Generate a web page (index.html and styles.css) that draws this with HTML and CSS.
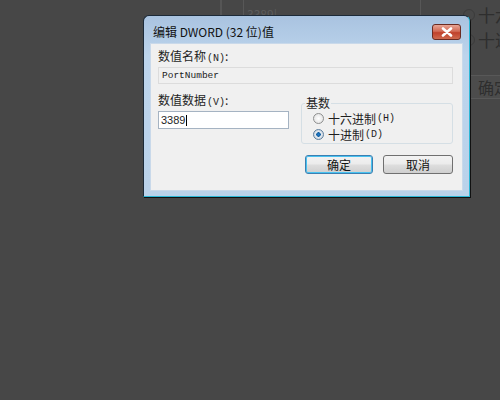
FILE: index.html
```html
<!DOCTYPE html>
<html lang="zh-CN">
<head>
    <meta charset="UTF-8">
    <title>编辑 DWORD (32 位)值</title>
    <link rel="stylesheet" href="styles.css">
</head>
<body>

<div class="desktop">
    <!-- ventana de fondo, casi oculta -->
    <div class="bg-line"></div>
    <div class="bg-input">3389|</div>
    <div class="bg-radio r1"></div>
    <div class="bg-radio r2"></div>
    <div class="bg-text t1">十六</div>
    <div class="bg-text t2">十进</div>
    <div class="bg-button">确定</div>

    <div class="dialog">
        <div class="titlebar">
            <span class="title">编辑 DWORD (32 位)值</span>
            <div class="close">
                <svg width="14" height="10" viewBox="0 0 14 10">
                    <path d="M3 1.5 L11 8.5 M11 1.5 L3 8.5" stroke="#fff" stroke-width="2.6" stroke-linecap="round"/>
                </svg>
            </div>
        </div>
        <div class="client">
            <div class="label">数值名称<span class="key">(N)</span>:</div>
            <div class="field readonly">PortNumber</div>

            <div class="row">
                <div class="data">
                    <div class="label">数值数据<span class="key">(V)</span>:</div>
                    <div class="field edit">3389<span class="caret"></span></div>
                </div>
                <fieldset class="group">
                    <legend>基数</legend>
                    <label class="radio"><span class="dot"></span>十六进制<span class="key">(H)</span></label>
                    <label class="radio"><span class="dot on"></span>十进制<span class="key">(D)</span></label>
                </fieldset>
            </div>

            <div class="buttons">
                <button class="btn default">确定</button>
                <button class="btn">取消</button>
            </div>
        </div>
    </div>
</div>

</body>
</html>
```

FILE: styles.css
```css
/* Diálogo estilo Windows 7 sobre fondo oscuro */
body {
    margin: 0;
    background-color: #474747;
    font-family: "Noto Sans CJK SC", "Liberation Sans", sans-serif;
    font-size: 12px;
    color: #1e1e1e;
}
.desktop {
    position: relative;
    width: 500px;
    height: 400px;
    overflow: hidden;
}

/* restos de la ventana de atrás */
.bg-line {
    position: absolute;
    left: 220px;
    top: 0;
    width: 2px;
    height: 20px;
    background-color: #555;
}
.bg-input {
    position: absolute;
    left: 243px;
    top: -4px;
    width: 178px;
    height: 22px;
    border: 1px solid #575757;
    color: #5c5c5c;
    font-size: 12px;
    line-height: 14px;
    padding: 10px 0 0 3px;
    box-sizing: border-box;
}
.bg-radio {
    position: absolute;
    left: 463px;
    width: 10px;
    height: 10px;
    border: 1px solid #3b3b3b;
    border-radius: 50%;
}
.bg-radio.r1 { top: 9px; }
.bg-radio.r2 { top: 34px; }
.bg-text {
    position: absolute;
    left: 478px;
    font-size: 17px;
    line-height: 22px;
    color: #2e2e2e;
    white-space: nowrap;
}
.bg-text.t1 { top: 4px; }
.bg-text.t2 { top: 29px; }
.bg-button {
    position: absolute;
    left: 466px;
    top: 75px;
    width: 50px;
    height: 22px;
    border: 1px solid #585858;
    background-color: #4c4c4c;
    color: #2e2e2e;
    font-size: 16px;
    line-height: 22px;
    padding-left: 11px;
}

/* ventana */
.dialog {
    position: absolute;
    left: 143px;
    top: 15px;
    width: 325px;
    height: 180px;
    border: 1px solid #1c2a38;
    border-right-color: #2bb7d6;
    border-bottom-color: #2bb7d6;
    border-radius: 6px 6px 0 0;
    background: linear-gradient(#a9c3e0, #bcd4ec 40px, #bad2ea);
    box-shadow: 1px 1px 0 #111;
}
.titlebar {
    display: flex;
    align-items: center;
    height: 27px;
    padding: 0 8px 0 9px;
}
.title {
    flex: 1;
    font-size: 12px;
    color: #111;
    padding-top: 4px;
}
.close {
    display: flex;
    align-items: center;
    justify-content: center;
    width: 27px;
    height: 14px;
    margin-top: 4px;
    border: 1px solid #6b2b22;
    border-radius: 3px;
    background: linear-gradient(#e7a595, #d26a55 45%, #c0412b 55%, #cf6a4f);
}
.client {
    margin: 0 6px;
    height: 148px;
    box-sizing: border-box;
    background-color: #f0f0f0;
    border: 1px solid #c9d9ea;
    padding: 3px 9px 0 7px;
}
.label {
    line-height: 18px;
    height: 18px;
}
.key {
    font-family: "Liberation Mono", monospace;
    font-size: 10px;
    margin-left: 1px;
}
.field {
    box-sizing: border-box;
    border: 1px solid #dcdcdc;
    height: 17px;
    padding-left: 3px;
}
.readonly {
    margin-top: 2px;
    background-color: #f0f0f0;
    font-family: "Liberation Mono", monospace;
    font-size: 9.5px;
    line-height: 15px;
    color: #222;
}
.row {
    display: flex;
    justify-content: space-between;
    margin-top: 7px;
}
.data {
    width: 131px;
}
.edit {
    margin-top: 2px;
    height: 18px;
    background-color: #fff;
    border-color: #a5b3c2;
    line-height: 16px;
    font-family: "Liberation Sans", sans-serif;
    font-size: 11px;
    padding-left: 2px;
}
.caret {
    display: inline-block;
    width: 1px;
    height: 11px;
    background-color: #000;
    vertical-align: -2px;
    margin-left: 1px;
}
.group {
    width: 152px;
    height: 48px;
    box-sizing: border-box;
    margin: 0;
    padding: 0 0 0 11px;
    border: 1px solid #d5dfe5;
    border-radius: 3px;
    margin-top: 5px;
}
.group legend {
    padding: 0 1px;
    margin-left: -8px;
    line-height: 14px;
    font-size: 12px;
}
.radio {
    display: flex;
    align-items: center;
    height: 16px;
}
.dot {
    box-sizing: border-box;
    width: 11px;
    height: 11px;
    margin-right: 4px;
    border: 1px solid #8e8f8f;
    border-radius: 50%;
    background: radial-gradient(#ffffff, #dcdcdc);
}
.dot.on {
    border-color: #5e7f9e;
    background: radial-gradient(circle, #1f7ccf 0, #145fa0 2px, #e9eef3 2.5px, #c8d2dc 5px);
}
.buttons {
    display: flex;
    justify-content: flex-end;
    gap: 10px;
    margin-top: 11px;
}
.btn {
    width: 70px;
    height: 19px;
    padding: 0;
    font-family: "Noto Sans CJK SC", sans-serif;
    font-size: 12px;
    line-height: 15px;
    color: #111;
    border: 1px solid #707070;
    border-radius: 3px;
    background: linear-gradient(#f3f3f3, #ececec 45%, #dddddd 55%, #cfcfcf);
}
.btn.default {
    width: 68px;
    border-color: #3c7fb1;
    box-shadow: inset 0 0 0 1px #48c2f0;
}
```
